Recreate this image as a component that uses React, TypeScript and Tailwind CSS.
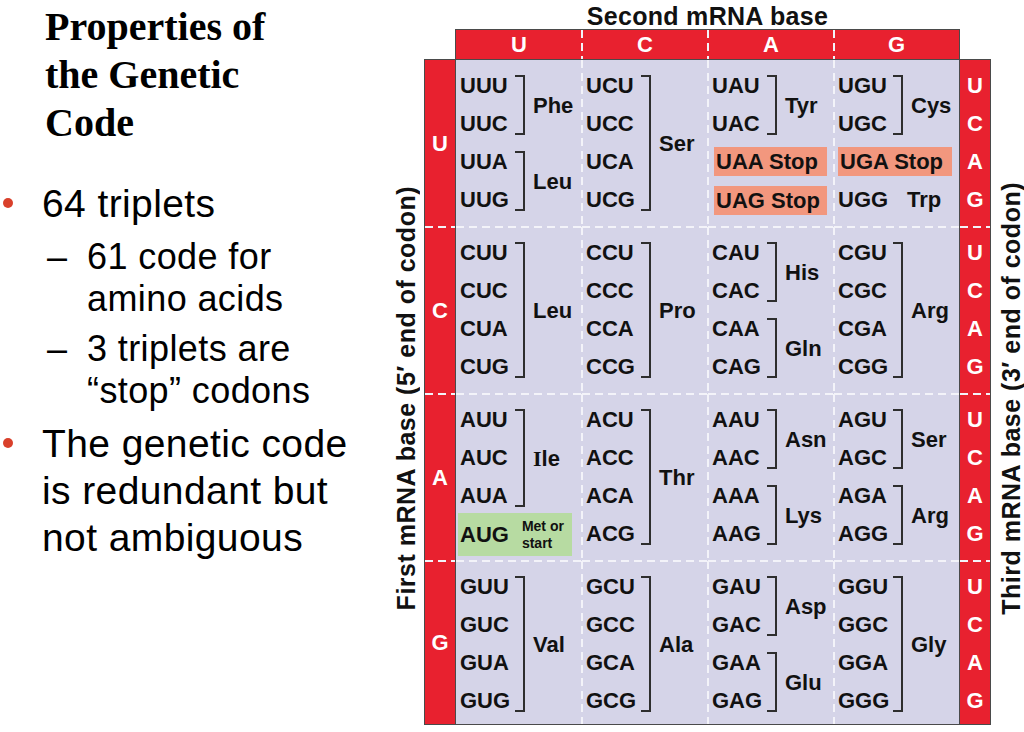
import type { ReactNode } from 'react';

const SANS = "font-['Liberation_Sans',Arial,sans-serif]";

const ROW_START = ['row-start-1', 'row-start-2', 'row-start-3', 'row-start-4'];
const ROW_SPAN: Record<number, string> = { 1: 'row-span-1', 2: 'row-span-2', 3: 'row-span-3', 4: 'row-span-4' };

const VDASH =
    'pointer-events-none absolute -right-px top-0 h-full w-[2px] bg-[repeating-linear-gradient(to_bottom,#f3f3f9_0px,#f3f3f9_8px,transparent_8px,transparent_13px)]';
const HDASH =
    'pointer-events-none absolute -bottom-px left-0 h-[2px] w-full bg-[repeating-linear-gradient(to_right,#f3f3f9_0px,#f3f3f9_8px,transparent_8px,transparent_13px)]';

const BASES = ['U', 'C', 'A', 'G'];
const ROW_H = ['h-[167px]', 'h-[167px]', 'h-[167px]', 'flex-1'];

type Group = { start: number; span: number; label: ReactNode };
type Cell = { codons: (string | null)[]; groups: Group[]; extra?: ReactNode };

const stopBox = 'col-start-1 col-span-3 h-[29px] w-[113px] bg-[#f2977e] pl-[2px] leading-[29px] whitespace-nowrap';

const CELLS: Cell[][] = [
    [
        { codons: ['UUU', 'UUC', 'UUA', 'UUG'], groups: [{ start: 0, span: 2, label: 'Phe' }, { start: 2, span: 2, label: 'Leu' }] },
        { codons: ['UCU', 'UCC', 'UCA', 'UCG'], groups: [{ start: 0, span: 4, label: 'Ser' }] },
        {
            codons: ['UAU', 'UAC', null, null],
            groups: [{ start: 0, span: 2, label: 'Tyr' }],
            extra: (
                <>
                    <div className={`${stopBox} row-start-3 ml-[2px] mt-[4px]`}>UAA Stop</div>
                    <div className={`${stopBox} row-start-4 ml-[2px] mt-[5px]`}>UAG Stop</div>
                </>
            ),
        },
        {
            codons: ['UGU', 'UGC', null, 'UGG'],
            groups: [{ start: 0, span: 2, label: 'Cys' }],
            extra: (
                <>
                    <div className={`${stopBox} row-start-3 mt-[4px] w-[114px]`}>UGA Stop</div>
                    <div className="col-start-2 col-span-2 row-start-4 self-center pl-[14px]">Trp</div>
                </>
            ),
        },
    ],
    [
        { codons: ['CUU', 'CUC', 'CUA', 'CUG'], groups: [{ start: 0, span: 4, label: 'Leu' }] },
        { codons: ['CCU', 'CCC', 'CCA', 'CCG'], groups: [{ start: 0, span: 4, label: 'Pro' }] },
        { codons: ['CAU', 'CAC', 'CAA', 'CAG'], groups: [{ start: 0, span: 2, label: 'His' }, { start: 2, span: 2, label: 'Gln' }] },
        { codons: ['CGU', 'CGC', 'CGA', 'CGG'], groups: [{ start: 0, span: 4, label: 'Arg' }] },
    ],
    [
        {
            codons: ['AUU', 'AUC', 'AUA', null],
            groups: [
                {
                    start: 0,
                    span: 3,
                    label: (
                        <>
                            <span className="font-['Liberation_Serif',serif]">I</span>le
                        </>
                    ),
                },
            ],
            extra: (
                <div className="col-start-1 col-span-3 row-start-4 -ml-[2px] -mt-[2px] flex h-[43px] w-[114px] items-center bg-[#b7dba2] pl-[2px]">
                    <span>AUG</span>
                    <span className="ml-[13px] text-[14px] leading-[17px]">
                        Met or
                        <br />
                        start
                    </span>
                </div>
            ),
        },
        { codons: ['ACU', 'ACC', 'ACA', 'ACG'], groups: [{ start: 0, span: 4, label: 'Thr' }] },
        { codons: ['AAU', 'AAC', 'AAA', 'AAG'], groups: [{ start: 0, span: 2, label: 'Asn' }, { start: 2, span: 2, label: 'Lys' }] },
        { codons: ['AGU', 'AGC', 'AGA', 'AGG'], groups: [{ start: 0, span: 2, label: 'Ser' }, { start: 2, span: 2, label: 'Arg' }] },
    ],
    [
        { codons: ['GUU', 'GUC', 'GUA', 'GUG'], groups: [{ start: 0, span: 4, label: 'Val' }] },
        { codons: ['GCU', 'GCC', 'GCA', 'GCG'], groups: [{ start: 0, span: 4, label: 'Ala' }] },
        { codons: ['GAU', 'GAC', 'GAA', 'GAG'], groups: [{ start: 0, span: 2, label: 'Asp' }, { start: 2, span: 2, label: 'Glu' }] },
        { codons: ['GGU', 'GGC', 'GGA', 'GGG'], groups: [{ start: 0, span: 4, label: 'Gly' }] },
    ],
];

function CodonCell({ cell, r, c }: { cell: Cell; r: number; c: number }) {
    return (
        <div className="relative">
            <div className="grid grid-cols-[55px_10px_1fr] grid-rows-[repeat(4,38px)] pl-[4px] pt-[7px] leading-[38px]">
                {cell.codons.map((codon, i) =>
                    codon ? (
                        <div key={i} className={`col-start-1 ${ROW_START[i]}`}>
                            {codon}
                        </div>
                    ) : null
                )}
                {cell.groups.map((g) => (
                    <div key={`b${g.start}`} className={`col-start-2 ${ROW_START[g.start]} ${ROW_SPAN[g.span]} my-2 border-y-2 border-r-2 border-[#2e2e2e]`} />
                ))}
                {cell.groups.map((g) => (
                    <div key={`l${g.start}`} className={`col-start-3 ${ROW_START[g.start]} ${ROW_SPAN[g.span]} self-center pl-2 leading-normal`}>
                        {g.label}
                    </div>
                ))}
                {cell.extra}
            </div>
            {c < 3 && <div className={VDASH} />}
            {r < 3 && <div className={HDASH} />}
        </div>
    );
}

function CodonTable() {
    return (
        <div className={`flex flex-col font-bold text-[#111] ${SANS}`}>
            <div className="ml-[63px] h-[29px] w-[505px] pt-[3px] text-center text-[25px] leading-[26px] tracking-[0.3px] whitespace-nowrap">
                Second mRNA base
            </div>
            <div className="ml-[63px] flex h-[31px] w-[505px] border border-[#4a4a4a] bg-[#e8212f] text-[22px] text-white">
                {BASES.map((b, i) => (
                    <div key={b} className={`relative flex items-center justify-center ${i < 3 ? 'w-[126px]' : 'flex-1'}`}>
                        {b}
                        {i < 3 && <div className={VDASH} />}
                    </div>
                ))}
            </div>
            <div className="-mt-px flex h-[666px] text-[22px]">
                <div className="flex w-[28px] items-center justify-center pt-[12px]">
                    <div className="rotate-180 text-[25px] leading-[28px] tracking-[0.5px] whitespace-nowrap [writing-mode:vertical-rl]">
                        First mRNA base (5′ end of codon)
                    </div>
                </div>
                <div className="ml-[4px] flex w-[32px] flex-col border border-[#4a4a4a] bg-[#e8212f] text-white">
                    {BASES.map((b, i) => (
                        <div key={b} className={`relative flex items-center justify-center ${ROW_H[i]}`}>
                            {b}
                            {i < 3 && <div className={HDASH} />}
                        </div>
                    ))}
                </div>
                <div className="grid w-[503px] grid-cols-[126px_126px_126px_125px] grid-rows-[167px_167px_167px_163px] border-y border-[#4a4a4a] bg-[#d5d4e8]">
                    {CELLS.map((row, r) => row.map((cell, c) => <CodonCell key={`${r}${c}`} cell={cell} r={r} c={c} />))}
                </div>
                <div className="flex w-[32px] flex-col border border-[#4a4a4a] bg-[#e8212f] text-white">
                    {BASES.map((b, i) => (
                        <div key={b} className={`relative grid grid-rows-[repeat(4,38px)] pt-[7px] text-center leading-[38px] ${ROW_H[i]}`}>
                            {BASES.map((t) => (
                                <div key={t}>{t}</div>
                            ))}
                            {i < 3 && <div className={HDASH} />}
                        </div>
                    ))}
                </div>
                <div className="ml-[7px] flex w-[26px] items-center justify-center pt-[12px]">
                    <div className="rotate-180 text-[25px] leading-[26px] tracking-[0.5px] whitespace-nowrap [writing-mode:vertical-rl]">
                        Third mRNA base (3′ end of codon)
                    </div>
                </div>
            </div>
        </div>
    );
}

export default function App() {
    return (
        <div className="flex h-[732px] w-[1024px] overflow-hidden bg-white text-black">
            <div className={`w-[392px] shrink-0 ${SANS}`}>
                <h1 className="pl-[45px] pt-[3px] font-['Liberation_Serif','Times_New_Roman',serif] text-[40px] leading-[48px] font-bold">
                    Properties of
                    <br />
                    the Genetic
                    <br />
                    Code
                </h1>
                <ul className="mt-[33px] tracking-[0.4px]">
                    <li className="flex">
                        <span className="ml-[3px] mt-[18px] h-[10px] w-[10px] shrink-0 rounded-full bg-[#d9402b]" />
                        <span className="ml-[29px] text-[39px] leading-[47px]">64 triplets</span>
                    </li>
                    <li className="mt-[9px] flex text-[36px] leading-[42px]">
                        <span className="ml-[47px] w-[40px] shrink-0">–</span>
                        <span>
                            61 code for
                            <br />
                            amino acids
                        </span>
                    </li>
                    <li className="mt-[8px] flex text-[36px] leading-[42px]">
                        <span className="ml-[47px] w-[40px] shrink-0">–</span>
                        <span>
                            3 triplets are
                            <br />
                            “stop” codons
                        </span>
                    </li>
                    <li className="mt-[8px] flex">
                        <span className="ml-[3px] mt-[18px] h-[10px] w-[10px] shrink-0 rounded-full bg-[#d9402b]" />
                        <span className="ml-[29px] text-[39px] leading-[47px]">
                            The genetic code
                            <br />
                            is redundant but
                            <br />
                            not ambiguous
                        </span>
                    </li>
                </ul>
            </div>
            <CodonTable />
        </div>
    );
}
